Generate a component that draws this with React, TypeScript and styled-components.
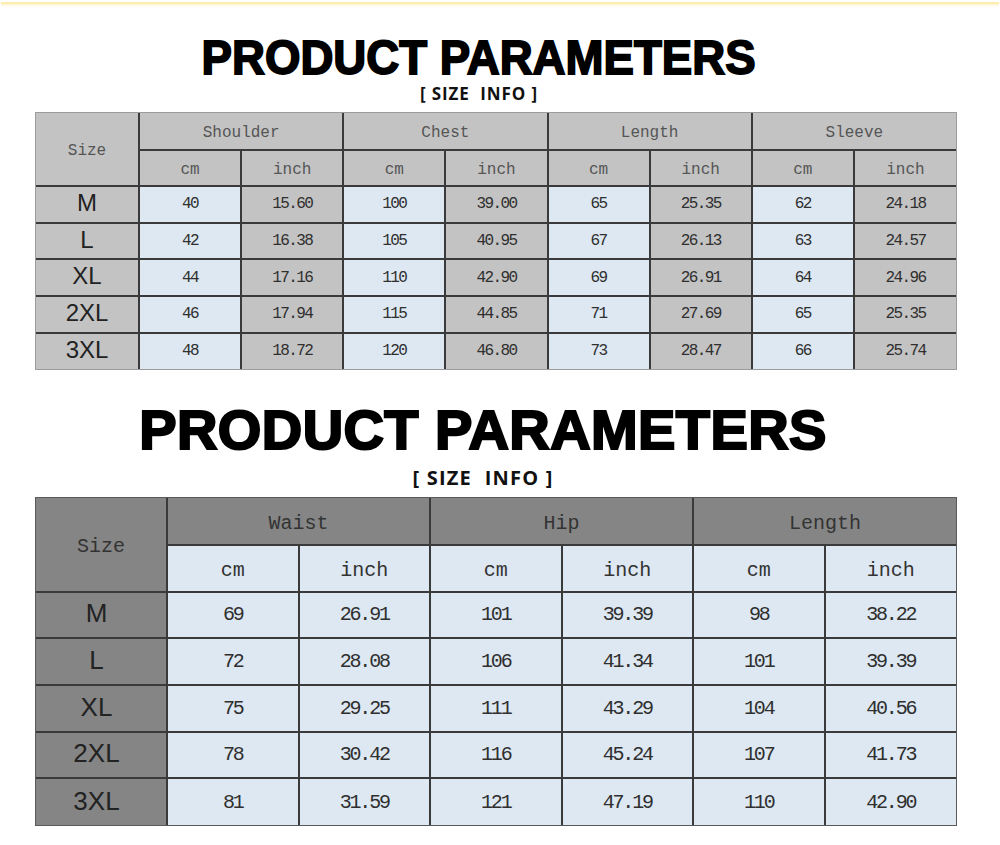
import { createGlobalStyle, styled } from "styled-components";

type Tone = "gray" | "dark" | "blue";

interface ISpec {
  sizeCol: number;
  rowHeight: number;
  headFont: number;
  numFont: number;
  numSpacing: number;
  sizeFont: number;
  sizeShift: number;
  headColor: string;
  frame: string;
  band: Tone;
  sub: Tone;
  cm: Tone;
  inch: Tone;
  side: Tone;
}

interface ISizeTableProps {
  spec: ISpec;
  groups: string[];
  rows: [string, string[]][];
}

const tones: Record<Tone, string> = {
  gray: "#c3c3c3",
  dark: "#858585",
  blue: "#dde8f2",
};

const topSpec: ISpec = {
  sizeCol: 103,
  rowHeight: 36.6,
  headFont: 16,
  numFont: 16,
  numSpacing: -1.6,
  sizeFont: 24,
  sizeShift: 0,
  headColor: "#555555",
  frame: "#9c9c9c",
  band: "gray",
  sub: "gray",
  cm: "blue",
  inch: "gray",
  side: "gray",
};

const bottomSpec: ISpec = {
  sizeCol: 131,
  rowHeight: 46.7,
  headFont: 20,
  numFont: 20,
  numSpacing: -2.2,
  sizeFont: 26,
  sizeShift: 9,
  headColor: "#333333",
  frame: "#5a5a5a",
  band: "dark",
  sub: "blue",
  cm: "blue",
  inch: "blue",
  side: "dark",
};

const shirtRows: [string, string[]][] = [
  ["M", ["40", "15.60", "100", "39.00", "65", "25.35", "62", "24.18"]],
  ["L", ["42", "16.38", "105", "40.95", "67", "26.13", "63", "24.57"]],
  ["XL", ["44", "17.16", "110", "42.90", "69", "26.91", "64", "24.96"]],
  ["2XL", ["46", "17.94", "115", "44.85", "71", "27.69", "65", "25.35"]],
  ["3XL", ["48", "18.72", "120", "46.80", "73", "28.47", "66", "25.74"]],
];

const pantsRows: [string, string[]][] = [
  ["M", ["69", "26.91", "101", "39.39", "98", "38.22"]],
  ["L", ["72", "28.08", "106", "41.34", "101", "39.39"]],
  ["XL", ["75", "29.25", "111", "43.29", "104", "40.56"]],
  ["2XL", ["78", "30.42", "116", "45.24", "107", "41.73"]],
  ["3XL", ["81", "31.59", "121", "47.19", "110", "42.90"]],
];

const GlobalStyle = createGlobalStyle`
  body {
    margin: 0;
    background: #ffffff;
  }
`;

const Page = styled.div`
  width: 1000px;
  min-height: 845px;
  background: #ffffff;
`;

const TopRule = styled.div`
  height: 2px;
  margin: 2px 1px 0;
  background: #fbeeb0;
  box-shadow: 0 1px 2px rgba(250, 230, 150, 0.6);
`;

const Section = styled.section<{ $gap: number }>`
  display: flex;
  flex-direction: column;
  padding: ${(p) => p.$gap}px 43px 0 35px;
`;

const Heading = styled.div<{ $shift: number }>`
  display: flex;
  flex-direction: column;
  align-items: center;
  padding-right: ${(p) => p.$shift}px;
`;

const Title = styled.h1<{ $size: number; $spacing: number; $stroke: number; $squeeze: number }>`
  margin: 0;
  font-family: "Liberation Sans", Arial, sans-serif;
  font-weight: 700;
  font-size: ${(p) => p.$size}px;
  line-height: 1;
  letter-spacing: ${(p) => p.$spacing}px;
  color: #000000;
  -webkit-text-stroke: ${(p) => p.$stroke}px #000000;
  white-space: nowrap;
  transform: scaleX(${(p) => p.$squeeze});
`;

const Subtitle = styled.div<{ $size: number; $top: number; $spacing: number }>`
  margin-top: ${(p) => p.$top}px;
  font-family: "Open Sans", "Liberation Sans", sans-serif;
  font-weight: 700;
  font-size: ${(p) => p.$size}px;
  line-height: 1;
  letter-spacing: ${(p) => p.$spacing}px;
  color: #111111;
  white-space: pre;
`;

const Frame = styled.div<{ $frame: string; $top: number }>`
  width: 922px;
  margin-top: ${(p) => p.$top}px;
  box-sizing: border-box;
  border: 1px solid ${(p) => p.$frame};
`;

const Grid = styled.table`
  width: 100%;
  table-layout: fixed;
  border-collapse: collapse;
  border-style: hidden;
`;

const Row = styled.tr<{ $h: number }>`
  height: ${(p) => p.$h}px;
`;

const BaseCell = styled.td<{ $tone: Tone }>`
  padding: 0;
  border: 2px solid #3a3a3a;
  background: ${(p) => tones[p.$tone]};
  text-align: center;
  vertical-align: middle;
  white-space: nowrap;
`;

const HeadCell = styled(BaseCell)<{ $font: number; $color: string }>`
  padding-top: 4px;
  font-family: "Liberation Mono", "Courier New", monospace;
  font-size: ${(p) => p.$font}px;
  font-weight: 400;
  color: ${(p) => p.$color};
`;

const SizeCell = styled(BaseCell)<{ $font: number; $shift: number }>`
  padding: 0 ${(p) => p.$shift}px 3px 0;
  font-family: "Liberation Sans", Arial, sans-serif;
  font-size: ${(p) => p.$font}px;
  line-height: 1;
  color: #222222;
`;

const NumCell = styled(BaseCell)<{ $font: number; $spacing: number }>`
  font-family: "Liberation Mono", "Courier New", monospace;
  font-size: ${(p) => p.$font}px;
  letter-spacing: ${(p) => p.$spacing}px;
  color: #2f2f2f;
`;

function SizeTable({ spec, groups, rows }: ISizeTableProps) {
  return (
    <Grid>
      <colgroup>
        <col style={{ width: spec.sizeCol }} />
        {groups.map((g) => [<col key={g + "cm"} />, <col key={g + "in"} />])}
      </colgroup>
      <thead>
        <Row $h={spec.rowHeight}>
          <HeadCell as="th" rowSpan={2} $tone={spec.side} $font={spec.headFont} $color={spec.headColor}>
            Size
          </HeadCell>
          {groups.map((g) => (
            <HeadCell as="th" key={g} colSpan={2} $tone={spec.band} $font={spec.headFont} $color={spec.headColor}>
              {g}
            </HeadCell>
          ))}
        </Row>
        <Row $h={spec.rowHeight}>
          {groups.map((g) => [
            <HeadCell key={g + "cm"} $tone={spec.sub} $font={spec.headFont} $color={spec.headColor}>
              cm
            </HeadCell>,
            <HeadCell key={g + "in"} $tone={spec.sub} $font={spec.headFont} $color={spec.headColor}>
              inch
            </HeadCell>,
          ])}
        </Row>
      </thead>
      <tbody>
        {rows.map(([size, values]) => (
          <Row key={size} $h={spec.rowHeight}>
            <SizeCell $tone={spec.side} $font={spec.sizeFont} $shift={spec.sizeShift}>
              {size}
            </SizeCell>
            {values.map((v, i) => (
              <NumCell
                key={i}
                $tone={i % 2 === 0 ? spec.cm : spec.inch}
                $font={spec.numFont}
                $spacing={spec.numSpacing}
              >
                {v}
              </NumCell>
            ))}
          </Row>
        ))}
      </tbody>
    </Grid>
  );
}

export default function App() {
  return (
    <Page>
      <GlobalStyle />
      <TopRule />
      <Section $gap={30}>
        <Heading $shift={34}>
          <Title $size={48} $spacing={0} $stroke={1.8} $squeeze={0.95}>
            PRODUCT PARAMETERS
          </Title>
          <Subtitle $size={17} $top={3} $spacing={0.9}>
            {"[ SIZE  INFO ]"}
          </Subtitle>
        </Heading>
        <Frame $frame={topSpec.frame} $top={10}>
          <SizeTable spec={topSpec} groups={["Shoulder", "Chest", "Length", "Sleeve"]} rows={shirtRows} />
        </Frame>
      </Section>
      <Section $gap={32}>
        <Heading $shift={26}>
          <Title $size={56} $spacing={0.4} $stroke={2.2} $squeeze={1}>
            PRODUCT PARAMETERS
          </Title>
          <Subtitle $size={20} $top={10} $spacing={1.2}>
            {"[ SIZE  INFO ]"}
          </Subtitle>
        </Heading>
        <Frame $frame={bottomSpec.frame} $top={9}>
          <SizeTable spec={bottomSpec} groups={["Waist", "Hip", "Length"]} rows={pantsRows} />
        </Frame>
      </Section>
    </Page>
  );
}
